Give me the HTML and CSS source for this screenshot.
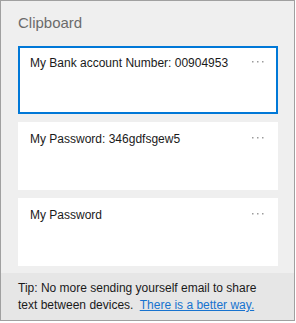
FILE: index.html
```html
<!DOCTYPE html>
<html lang="en">
<head>
    <meta charset="UTF-8">
    <meta name="viewport" content="width=device-width, initial-scale=1.0">
    <title>Clipboard</title>
    <link rel="stylesheet" href="styles.css">
</head>
<body>

    <div class="panel">
        <div class="panel-body">
            <h1 class="title">Clipboard</h1>

            <div class="clip-list">
                <div class="clip selected">
                    <span class="clip-text">My Bank account Number: 00904953</span>
                    <svg class="clip-more" width="12" height="2" viewBox="0 0 12 2"><rect x="0" y="0" width="1.5" height="1.5"/><rect x="5" y="0" width="1.5" height="1.5"/><rect x="10" y="0" width="1.5" height="1.5"/></svg>
                </div>
                <div class="clip">
                    <span class="clip-text">My Password: 346gdfsgew5</span>
                    <svg class="clip-more" width="12" height="2" viewBox="0 0 12 2"><rect x="0" y="0" width="1.5" height="1.5"/><rect x="5" y="0" width="1.5" height="1.5"/><rect x="10" y="0" width="1.5" height="1.5"/></svg>
                </div>
                <div class="clip">
                    <span class="clip-text">My Password</span>
                    <svg class="clip-more" width="12" height="2" viewBox="0 0 12 2"><rect x="0" y="0" width="1.5" height="1.5"/><rect x="5" y="0" width="1.5" height="1.5"/><rect x="10" y="0" width="1.5" height="1.5"/></svg>
                </div>
            </div>
        </div>

        <!-- Подсказка внизу панели -->
        <div class="tip">
            <div>Tip: No more sending yourself email to share</div>
            <div>text between devices. <a href="#" class="tip-link">There is a better way.</a></div>
        </div>
    </div>

</body>
</html>
```

FILE: styles.css
```css
body {
    font-family: "Liberation Sans", Arial, sans-serif;
    margin: 0;
    padding: 0;
    background-color: #fff;
}
.panel {
    width: 295px;
    height: 321px;
    box-sizing: border-box;
    border: 1px solid #a0a0a0;
    background-color: #efefef;
    display: flex;
    flex-direction: column;
}
.panel-body {
    flex-grow: 1;
    padding: 11px 16px 0 17px;
}
.title {
    margin: 0 0 12px 0;
    font-size: 15px;
    font-weight: normal;
    line-height: 22px;
    color: #6b6b6b;
}
.clip-list {
    display: flex;
    flex-direction: column;
    gap: 8px;
}
.clip {
    height: 68px;
    box-sizing: border-box;
    border: 2px solid #fff;
    background-color: #fff;
    padding: 7px 10px;
    display: flex;
    justify-content: space-between;
    align-items: flex-start;
    font-size: 12px;
    line-height: 17px;
    color: #1a1a1a;
}
.clip.selected {
    border-color: #0078d7;
}
.clip-more {
    fill: #9c9c9c;
    margin: 6px 2px 0 0;
    flex-shrink: 0;
}
.tip {
    background-color: #e6e6e6;
    padding: 7px 17px 6px 17px;
    font-size: 12px;
    line-height: 17px;
    color: #1a1a1a;
}
.tip-link {
    color: #1773cf;
    text-decoration: underline;
    margin-left: 3px;
}
```
